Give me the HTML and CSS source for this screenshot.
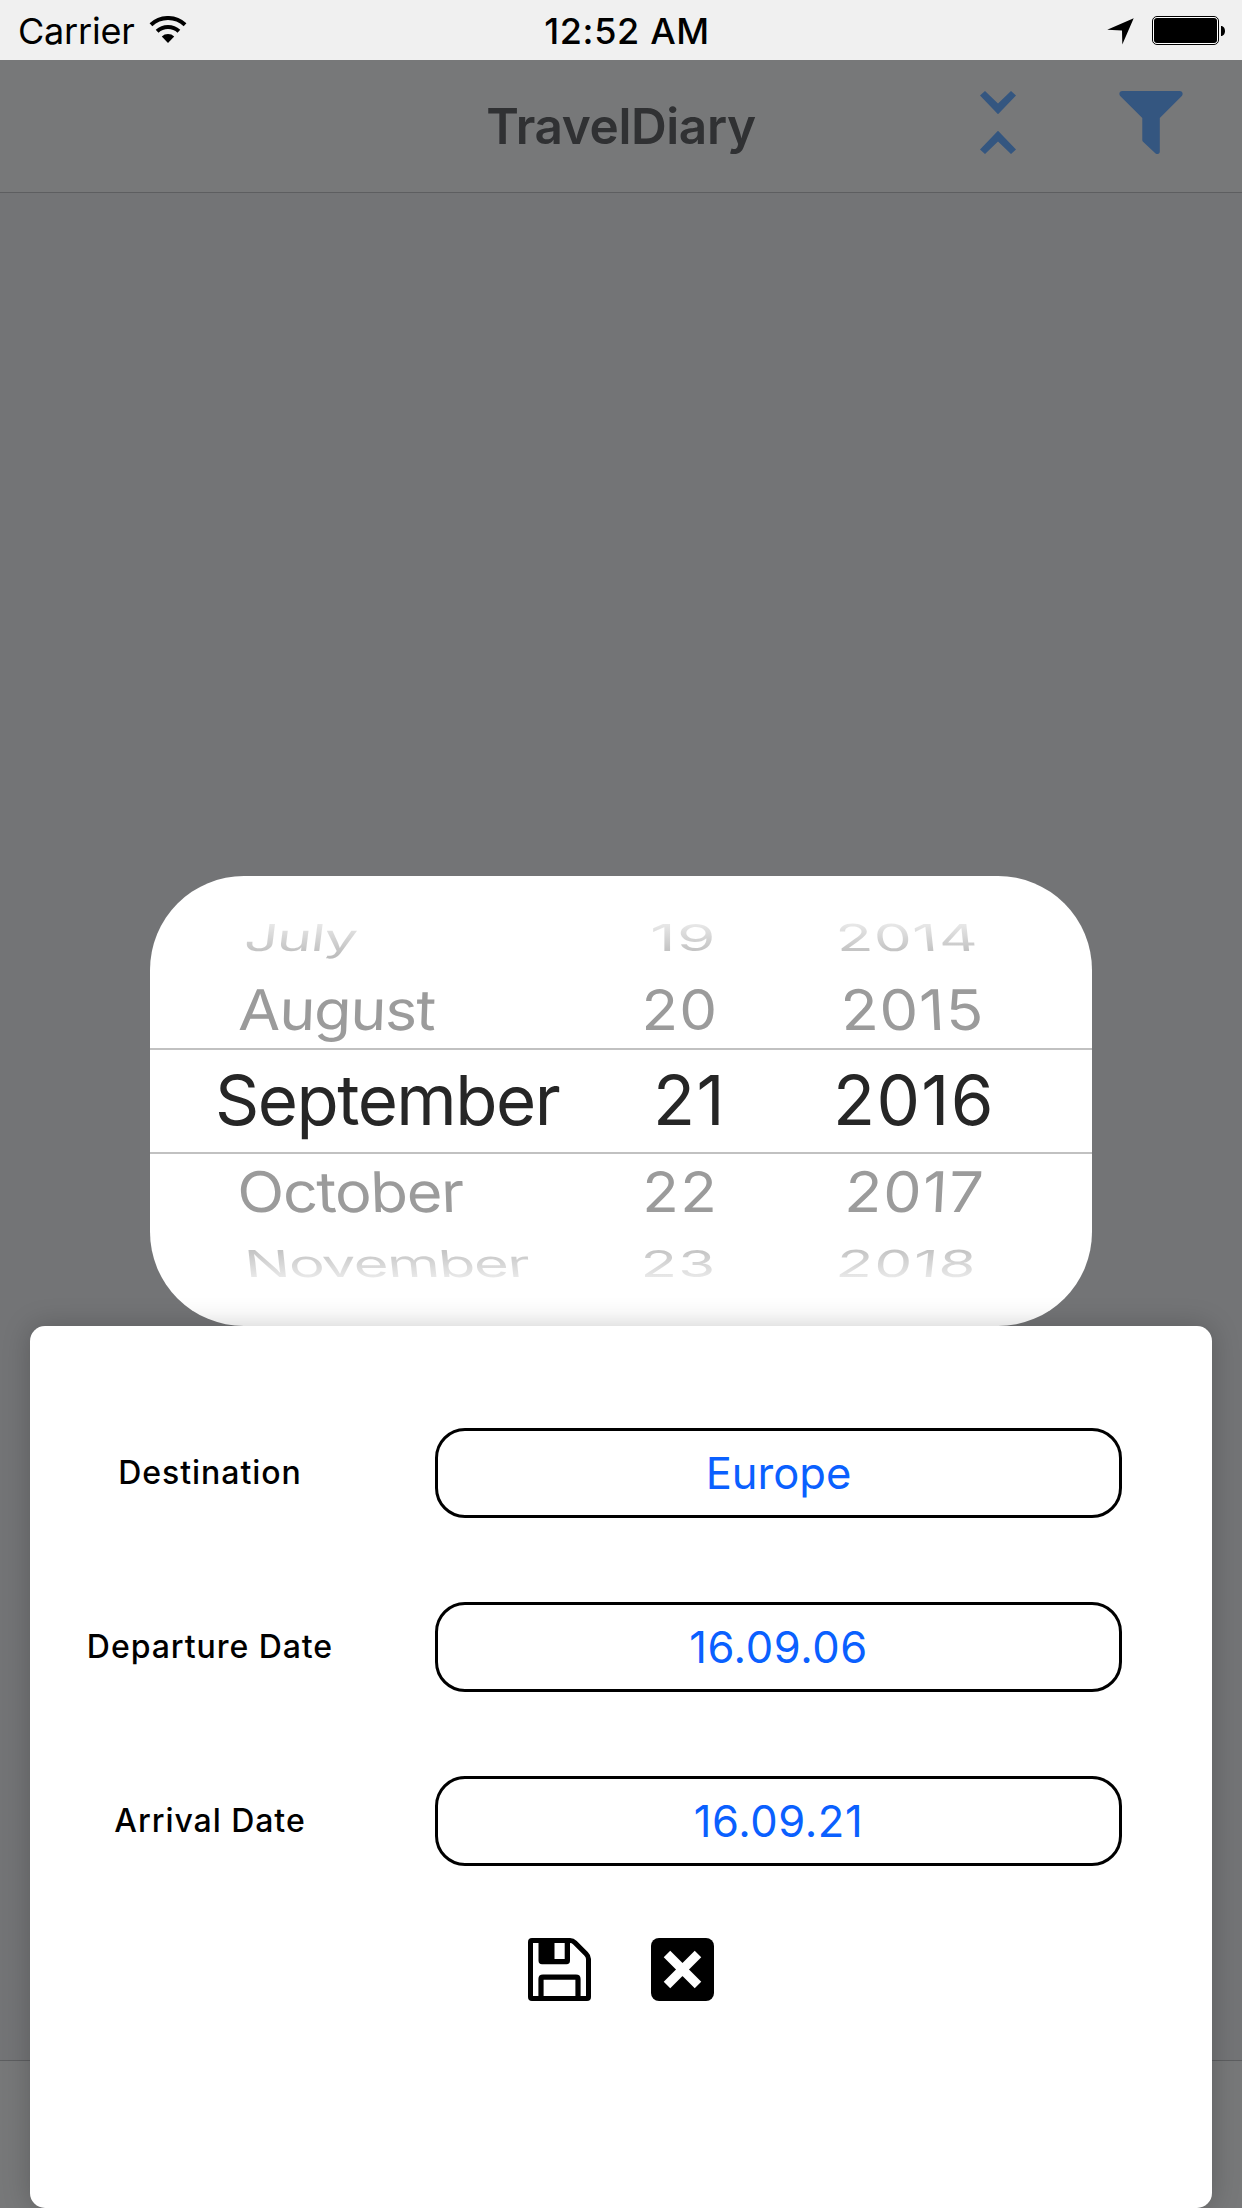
FILE: index.html
```html
<!DOCTYPE html>
<html lang="en">
<head>
<meta charset="utf-8">
<title>TravelDiary</title>
<link rel="stylesheet" href="styles.css">
</head>
<body>
<div class="screen">
  <header class="status">
    <div class="status-left">
      <span class="carrier">Carrier</span>
      <svg class="wifi" width="38" height="28" viewBox="0 0 38 28">
        <path d="M1.95 8.7A25 25 0 0 1 36.05 8.7M8.1 15.3A16 16 0 0 1 29.9 15.3" fill="none" stroke="#000" stroke-width="4"/>
        <path d="M19 27L12.8 20.4A9 9 0 0 1 25.2 20.4Z"/>
      </svg>
    </div>
    <span class="clock">12:52 AM</span>
    <div class="status-right">
      <svg width="27" height="27" viewBox="0 0 27 27"><path d="M26.7 0.2L0.2 11.7L15 12.4L15.3 26.6Z"/></svg>
      <svg width="74" height="29" viewBox="0 0 74 29">
        <rect x="0.5" y="0.5" width="66" height="28" rx="4.5" fill="#fff" stroke="#000"/>
        <rect x="2" y="2" width="63" height="25" rx="3"/>
        <path d="M69 10C74.300 10 74.300 20 69 20Z"/>
      </svg>
    </div>
  </header>

  <nav class="navbar">
    <h1 class="title">TravelDiary</h1>
    <div class="nav-actions">
      <svg width="36" height="63" viewBox="0 0 36 63">
        <path d="M0 4.600L5 0L18 12.500L31 0L36 4.600L18 23.300ZM0 58.400L5 63L18 50.500L31 63L36 58.400L18 39.700Z"/>
      </svg>
      <svg width="64" height="63" viewBox="0 0 64 63">
        <path d="M3.500 0H60.500C63.700 0 64.400 3 62.800 5L40.800 27V60.500C40.800 63 38 63.800 36.300 62.300L23.800 50.500C23.400 50 23.300 49.500 23.300 49V27L1.200 5C-0.400 3 0.300 0 3.500 0Z"/>
      </svg>
    </div>
  </nav>

  <main class="content"></main>
  <footer class="toolbar"></footer>

  <div class="overlay">
    <section class="picker">
      <div class="row far top"><span class="month">July</span><span class="day">19</span><span class="year">2014</span></div>
      <div class="row near top"><span class="month">August</span><span class="day">20</span><span class="year">2015</span></div>
      <div class="row selected"><span class="month">September</span><span class="day">21</span><span class="year">2016</span></div>
      <div class="row near bottom"><span class="month">October</span><span class="day">22</span><span class="year">2017</span></div>
      <div class="row far bottom"><span class="month">November</span><span class="day">23</span><span class="year">2018</span></div>
    </section>

    <section class="card">
      <div class="fields">
        <div class="field"><span class="label">Destination</span><div class="input">Europe</div></div>
        <div class="field"><span class="label">Departure Date</span><div class="input date">16.09.06</div></div>
        <div class="field"><span class="label">Arrival Date</span><div class="input date">16.09.21</div></div>
      </div>
      <div class="actions">
        <svg width="63" height="63" viewBox="0 0 63 63">
          <path d="M4 2.500H42C44 2.500 45.500 3.200 47 4.700L58 15.700C59.700 17.400 60.500 18.800 60.500 21V59Q60.500 60.500 59 60.500H4Q2.500 60.500 2.500 59V4Q2.500 2.500 4 2.500Z" fill="none" stroke="#000" stroke-width="5"/>
          <path fill-rule="evenodd" d="M10.500 3H42V22.500Q42 26.300 38.500 26.300H14Q10.500 26.300 10.500 22.500ZM26.500 5H36.700V21H26.500Z"/>
          <path d="M13 60V41Q13 39.200 15 39.200H48Q50 39.200 50 41V60" fill="none" stroke="#000" stroke-width="5.200"/>
        </svg>
        <svg width="63" height="63" viewBox="0 0 63 63">
          <rect width="63" height="63" rx="8"/>
          <path d="M16 16L47 47M47 16L16 47" stroke="#fff" stroke-width="9.200"/>
        </svg>
      </div>
    </section>
  </div>
</div>
</body>
</html>
```
FILE: styles.css
```css
* { box-sizing: border-box; }

body {
  margin: 0;
  font-family: Inter, "Liberation Sans", sans-serif;
  color: #000;
}

svg { display: block; flex: none; }

.screen {
  position: relative;
  display: flex;
  flex-direction: column;
  width: 1242px;
  height: 2208px;
  overflow: hidden;
  background: #737476;
}

/* Status bar */
.status {
  display: grid;
  grid-template-columns: 1fr auto 1fr;
  height: 60px;
  padding: 0 16px 0 18px;
  background: #f0f0f0;
  font-size: 36px;
  line-height: 62px;
}
.status-left { display: flex; align-items: flex-start; gap: 14px; }
.carrier { letter-spacing: -0.2px; }
.wifi { margin-top: 16px; }
.clock { padding-left: 10px; font-weight: 540; letter-spacing: 0.65px; }
.status-right {
  display: flex;
  justify-content: flex-end;
  align-items: flex-start;
  gap: 18px;
  padding-top: 16px;
}
.status-right svg:first-child { margin-top: 2px; }

/* Navigation bar */
.navbar {
  display: grid;
  grid-template-columns: 1fr auto 1fr;
  height: 133px;
  border-bottom: 1px solid #5d5e60;
  background: #777879;
}
.title {
  grid-column: 2;
  margin: 0;
  font-size: 49.5px;
  font-weight: 600;
  line-height: 132px;
  letter-spacing: -0.4px;
  color: #303133;
}
.nav-actions {
  display: flex;
  justify-content: flex-end;
  gap: 103px;
  padding: 31px 59.5px 0 0;
  fill: #345680;
}

.content { flex: 1; }
.toolbar {
  height: 148px;
  border-top: 1px solid #5d5e60;
  background: #777879;
}

/* Modal layer over the dimmed page */
.overlay {
  position: absolute;
  inset: 876px 30px 0;
  display: flex;
  flex-direction: column;
  align-items: center;
}

/* Date wheel */
.picker {
  width: 942px;
  height: 450px;
  padding-top: 8px;
  border-radius: 94px;
  background: #fff;
  font-size: 69px;
  line-height: 84px;
}
.row {
  display: grid;
  grid-template-columns: 450px 126px 270px;
  align-items: start;
}
.row span { transform-origin: 0 67px; }
.month { justify-self: start; letter-spacing: -1.5px; }
.row .day, .row .year {
  justify-self: end;
  letter-spacing: 1.4px;
  transform-origin: 100% 67px;
}

.selected {
  height: 106px;
  padding-top: 8px;
  border-top: 2px solid #c1c1c1;
  border-bottom: 2px solid #c1c1c1;
  color: #262626;
}
.selected .month { margin-left: 65px; }
.selected .year { margin-right: 1px; }

.near { color: #9b9b9b; }
.near span { transform: scale(0.87, 0.81); }
.near .month { margin-left: 88px; }
.near .day { margin-right: 8px; }
.near .year { margin-right: 11px; }
.near.top { height: 85px; }
.near.top .month { transform: skewX(-2deg) scale(0.885, 0.81); }
.near.top .year { transform: skewX(3deg) scale(0.89, 0.81); }
.near.bottom { height: 56px; }
.near.bottom span { margin-top: -9px; }
.near.bottom .month { transform: skewX(2deg) scale(0.89, 0.81); }
.near.bottom .year { margin-right: 13px; transform: skewX(-3deg) scale(0.88, 0.81); }

.far span {
  color: transparent;
  background-clip: text;
  -webkit-background-clip: text;
  transform: scale(0.87, 0.54);
}
.far .day { margin-right: 9px; }
.far .year { margin-right: 16px; }
.far.top { height: 79px; }
.far.top span { background-image: linear-gradient(#e8e8e8 17px, #c3c3c3 67px, #b9b9b9); }
.far.top .day { transform: scale(0.9, 0.54); }
.far.top .month { margin-left: 93px; transform: skewX(-7deg) scale(0.86, 0.54); }
.far.top .year { transform: skewX(6deg) scale(0.87, 0.54); }
.far.bottom span { background-image: linear-gradient(#c4c4c4 17px, #e8e8e8 67px); }
.far.bottom .month { margin-left: 96px; transform: skewX(6deg) scale(0.87, 0.54); }
.far.bottom .year { margin-right: 20px; transform: skewX(-6deg) scale(0.87, 0.54); }

/* Form card */
.card {
  align-self: stretch;
  height: 882px;
  padding-top: 102px;
  border-radius: 15px;
  background: #fff;
  box-shadow: 0 0 28px rgba(0, 0, 0, 0.21);
}
.fields { display: flex; flex-direction: column; gap: 84px; }
.field { display: flex; align-items: center; gap: 45px; }
.label {
  width: 360px;
  padding-bottom: 2px;
  text-align: center;
  font-size: 32px;
  font-weight: 500;
  letter-spacing: 0.95px;
}
.input {
  width: 687px;
  height: 90px;
  border: 3px solid #000;
  border-radius: 30px;
  text-align: center;
  font-size: 43.5px;
  line-height: 84px;
  color: #0a60ff;
}
.date { letter-spacing: 0.6px; }
.actions {
  display: flex;
  justify-content: center;
  gap: 60px;
  margin-top: 72px;
}
```
